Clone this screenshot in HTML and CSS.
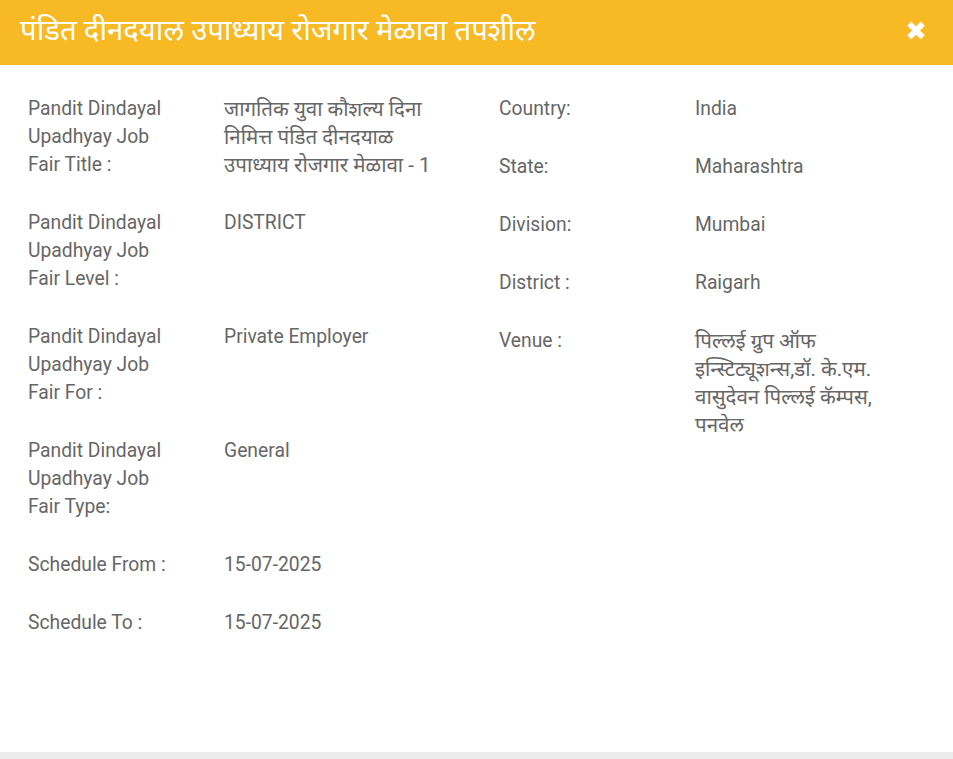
FILE: index.html
```html
<!DOCTYPE html>
<html lang="mr">
<head>
<meta charset="utf-8">
<link rel="stylesheet" href="styles.css">
</head>
<body>
<div class="modal">
  <div class="modal-header">
    <h1 class="modal-title">पंडित दीनदयाल उपाध्याय रोजगार मेळावा तपशील</h1>
    <span class="close">&#10006;</span>
  </div>
  <div class="modal-body">
    <div class="col col-left">
      <div class="row"><div class="label">Pandit Dindayal Upadhyay Job Fair Title :</div><div class="value deva title-value">जागतिक युवा कौशल्य दिना निमित्त पंडित दीनदयाळ उपाध्याय रोजगार मेळावा - 1</div></div>
      <div class="row"><div class="label">Pandit Dindayal Upadhyay Job Fair Level :</div><div class="value">DISTRICT</div></div>
      <div class="row"><div class="label">Pandit Dindayal Upadhyay Job Fair For :</div><div class="value">Private Employer</div></div>
      <div class="row"><div class="label">Pandit Dindayal Upadhyay Job Fair Type:</div><div class="value">General</div></div>
      <div class="row"><div class="label">Schedule From :</div><div class="value">15-07-2025</div></div>
      <div class="row"><div class="label">Schedule To :</div><div class="value">15-07-2025</div></div>
    </div>
    <div class="col col-right">
      <div class="row"><div class="label">Country:</div><div class="value">India</div></div>
      <div class="row"><div class="label">State:</div><div class="value">Maharashtra</div></div>
      <div class="row"><div class="label">Division:</div><div class="value">Mumbai</div></div>
      <div class="row"><div class="label">District :</div><div class="value">Raigarh</div></div>
      <div class="row"><div class="label">Venue :</div><div class="value deva venue">पिल्लई ग्रुप ऑफ इन्स्टिट्यूशन्स,डॉ. के.एम. वासुदेवन पिल्लई कॅम्पस, पनवेल</div></div>
    </div>
  </div>
  <div class="modal-footer"></div>
</div>
</body>
</html>
```
FILE: styles.css
```css
html, body {
  margin: 0;
  padding: 0;
  background: #fff;
}
.modal {
  width: 953px;
  height: 759px;
  display: flex;
  flex-direction: column;
  font-family: Roboto, "Noto Sans", sans-serif;
}
.modal-header {
  height: 65px;
  background: #f7b924;
  display: flex;
  align-items: center;
  justify-content: space-between;
  padding: 0 26px 4px 20px;
  box-sizing: border-box;
  flex: none;
}
.modal-title {
  margin: 0;
  color: #fff;
  font-size: 29.3px;
  font-weight: 400;
  line-height: 1;
}
.close {
  color: #fff;
  font-size: 26px;
  line-height: 1;
  font-family: "DejaVu Sans", sans-serif;
}
.modal-body {
  flex: 1;
  display: flex;
  padding: 30px 0 0 28px;
}
.col {
  display: flex;
  flex-direction: column;
}
.col-left {
  width: 471px;
  flex: none;
}
.col-right {
  flex: 1;
}
.row {
  display: flex;
  margin-bottom: 30px;
  font-size: 19.3px;
  line-height: 28px;
  color: #666;
}
.label {
  width: 196px;
  flex: none;
  padding-right: 50px;
  box-sizing: border-box;
}
.value {
  width: 240px;
}
.value.deva {
  font-size: 20.5px;
}
.value.title-value {
  width: 225px;
}
.value.venue {
  width: 215px;
}
.modal-footer {
  height: 7px;
  background: #ececec;
  flex: none;
}
```
